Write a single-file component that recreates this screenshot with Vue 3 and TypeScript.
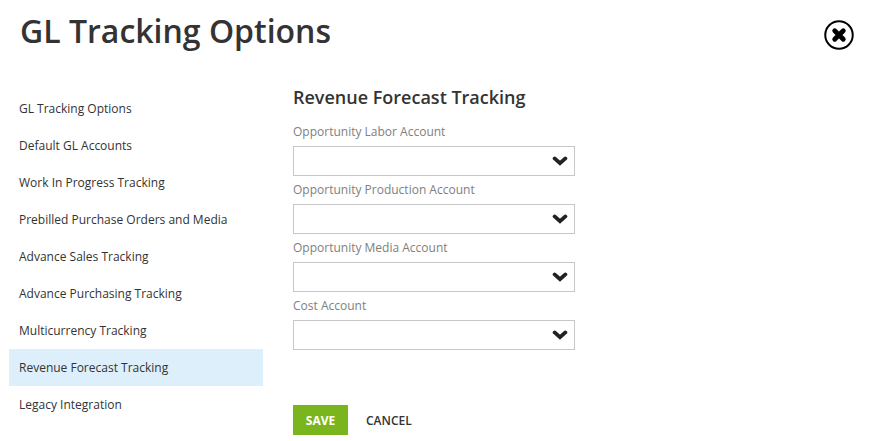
<script setup lang="ts">
import { ref } from "vue"

const navItems = [
  "GL Tracking Options",
  "Default GL Accounts",
  "Work In Progress Tracking",
  "Prebilled Purchase Orders and Media",
  "Advance Sales Tracking",
  "Advance Purchasing Tracking",
  "Multicurrency Tracking",
  "Revenue Forecast Tracking",
  "Legacy Integration",
]

const fields = [
  "Opportunity Labor Account",
  "Opportunity Production Account",
  "Opportunity Media Account",
  "Cost Account",
]

const active = ref("Revenue Forecast Tracking")
</script>

<template>
  <div class="page">
    <header class="head">
      <h1 class="title">GL Tracking Options</h1>
      <button class="close" type="button" aria-label="Close">
        <svg width="30" height="30" viewBox="0 0 30 30">
          <circle cx="15" cy="15" r="13.75" fill="#fff" stroke="#000" stroke-width="2" />
          <path d="M10.7 10.7 L19.3 19.3 M19.3 10.7 L10.7 19.3" stroke="#000" stroke-width="4.8" stroke-linecap="round" />
        </svg>
      </button>
    </header>
    <div class="body">
      <nav class="nav">
        <a
          v-for="item in navItems"
          :key="item"
          class="nav-item"
          :class="{ active: item === active }"
          @click="active = item"
        >{{ item }}</a>
      </nav>
      <section class="form">
        <h2 class="form-title">Revenue Forecast Tracking</h2>
        <div v-for="field in fields" :key="field" class="field">
          <label class="label">{{ field }}</label>
          <div class="select">
            <svg width="16" height="10" viewBox="0 0 16 10">
              <path d="M2.6 2.4 L8 7.2 L13.4 2.4" fill="none" stroke="#222" stroke-width="3.8" stroke-linecap="round" stroke-linejoin="miter" />
            </svg>
          </div>
        </div>
        <div class="actions">
          <button class="save" type="button">SAVE</button>
          <button class="cancel" type="button">CANCEL</button>
        </div>
      </section>
    </div>
  </div>
</template>

<style scoped>
.page {
  width: 889px;
  height: 441px;
  overflow: hidden;
  font-family: "Open Sans", sans-serif;
  color: #333;
  box-sizing: border-box;
}

.head {
  display: flex;
  align-items: flex-start;
  justify-content: space-between;
  padding: 10px 35px 0 20px;
  height: 90px;
  box-sizing: border-box;
}

.title {
  margin: 0;
  font-size: 32px;
  line-height: 42px;
  font-weight: 600;
  color: #333;
}

.close {
  border: 0;
  background: none;
  padding: 0;
  margin-top: 10px;
  width: 30px;
  height: 30px;
  cursor: pointer;
}

.body {
  display: flex;
  align-items: flex-start;
}

.nav {
  width: 254px;
  margin-left: 9px;
  display: flex;
  flex-direction: column;
}

.nav-item {
  height: 37px;
  line-height: 37px;
  padding-left: 10px;
  font-size: 12px;
  color: #333;
  cursor: pointer;
}

.nav-item.active {
  background: #ddeffa;
}

.form {
  width: 282px;
  margin-left: 30px;
  margin-top: -6px;
}

.form-title {
  margin: 0 0 13px;
  font-size: 18px;
  line-height: 26px;
  font-weight: 600;
  color: #333;
}

.field {
  margin-bottom: 5px;
}

.label {
  display: block;
  font-size: 12px;
  line-height: 18px;
  color: #808080;
  margin-bottom: 5px;
}

.select {
  height: 30px;
  box-sizing: border-box;
  border: 1px solid #c8c8c8;
  display: flex;
  align-items: center;
  justify-content: flex-end;
  padding-right: 6px;
}

.actions {
  display: flex;
  align-items: center;
  margin-top: 55px;
}

.save {
  width: 55px;
  height: 30px;
  border: 0;
  padding: 0;
  background: #7ab51d;
  color: #fff;
  font-family: inherit;
  font-size: 12px;
  font-weight: 700;
}

.cancel {
  border: 0;
  background: none;
  padding: 0;
  margin-left: 18px;
  color: #333;
  font-family: inherit;
  font-size: 12px;
  font-weight: 600;
}
</style>
